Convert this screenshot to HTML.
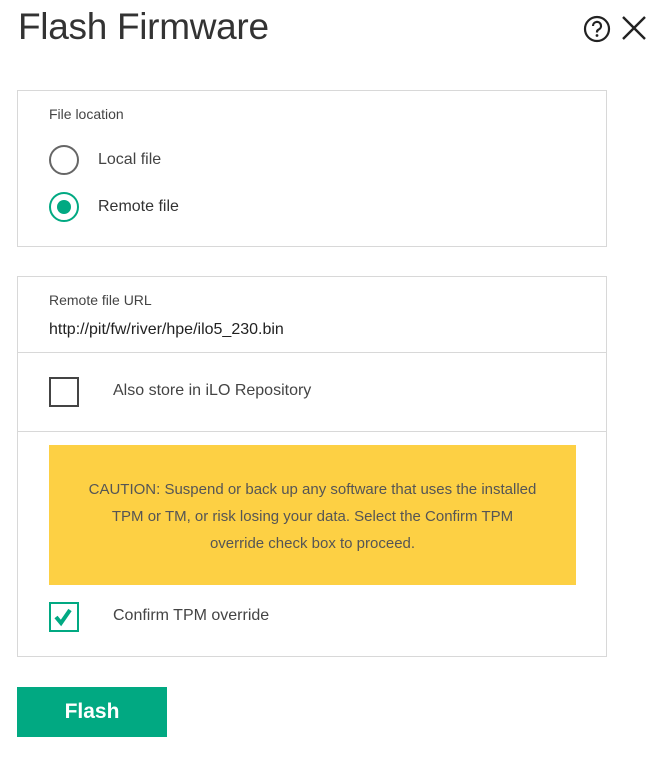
<!DOCTYPE html>
<html><head><style>
body{margin:0;width:657px;height:765px;background:#fff;font-family:"Liberation Sans",sans-serif;color:#444;position:relative;overflow:hidden}
.a{position:absolute;white-space:nowrap}
.box{position:absolute;border:1px solid #d8d8d8;box-sizing:border-box}
.hr{position:absolute;left:17px;width:590px;height:1px;background:#d8d8d8}
</style></head><body>
<div class="a" style="left:18px;top:6px;font-size:37px;color:#333;letter-spacing:-0.3px">Flash Firmware</div>
<svg class="a" style="left:582px;top:14px" width="30" height="30" viewBox="0 0 30 30"><circle cx="15" cy="15" r="12" fill="none" stroke="#222" stroke-width="2.2"/><path d="M11 12a4 4 0 1 1 5.5 3.6c-1 .5-1.5 1.2-1.5 2.4v.5" fill="none" stroke="#222" stroke-width="2.2"/><circle cx="15" cy="21.5" r="1.4" fill="#222"/></svg>
<svg class="a" style="left:620px;top:14px" width="28" height="28" viewBox="0 0 28 28"><path d="M3 3L25 25M25 3L3 25" stroke="#222" stroke-width="2.4"/></svg>

<div class="box" style="left:17px;top:90px;width:590px;height:157px"></div>
<div class="a" style="left:49px;top:106px;font-size:14px">File location</div>
<svg class="a" style="left:48px;top:144px" width="32" height="80"><circle cx="16" cy="16" r="14" fill="none" stroke="#666" stroke-width="2"/><circle cx="16" cy="63" r="14" fill="none" stroke="#01a982" stroke-width="2"/><circle cx="16" cy="63" r="7" fill="#01a982"/></svg>
<div class="a" style="left:98px;top:151px;font-size:16px">Local file</div>
<div class="a" style="left:98px;top:198px;font-size:16px;color:#333">Remote file</div>

<div class="box" style="left:17px;top:276px;width:590px;height:381px"></div>
<div class="a" style="left:49px;top:292px;font-size:14px">Remote file URL</div>
<div class="a" style="left:49px;top:321px;font-size:16px;color:#222">http://pit/fw/river/hpe/ilo5_230.bin</div>
<div class="hr" style="top:352px"></div>
<div class="a" style="left:49px;top:377px;width:26px;height:26px;border:2px solid #444"></div>
<div class="a" style="left:113px;top:382px;font-size:16px">Also store in iLO Repository</div>
<div class="hr" style="top:431px"></div>
<div class="a" style="left:49px;top:445px;width:527px;height:140px;background:#fdd044"></div>
<div class="a" style="left:49px;top:476px;width:527px;text-align:center;white-space:normal;font-size:15px;line-height:27px;color:#555">CAUTION: Suspend or back up any software that uses the installed<br>TPM or TM, or risk losing your data. Select the Confirm TPM<br>override check box to proceed.</div>
<div class="a" style="left:49px;top:602px;width:26px;height:26px;border:2px solid #01a982"></div>
<svg class="a" style="left:51px;top:604px" width="26" height="26"><path d="M5 13l5 6 9-13" fill="none" stroke="#01a982" stroke-width="4"/></svg>
<div class="a" style="left:113px;top:607px;font-size:16px">Confirm TPM override</div>

<div class="a" style="left:17px;top:687px;width:150px;height:50px;background:#01a982;color:#fff;font-weight:bold;font-size:21px;text-align:center;line-height:50px">Flash</div>
</body></html>
